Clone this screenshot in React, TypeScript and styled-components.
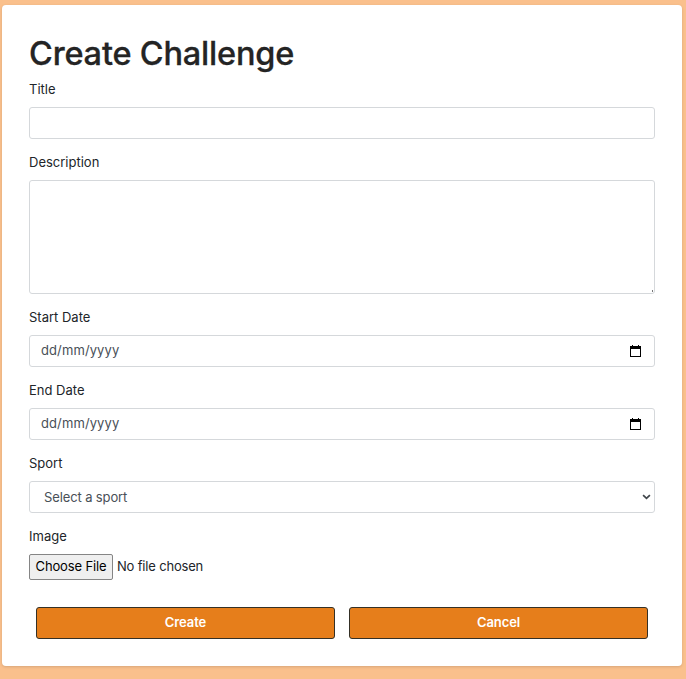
import React from "react";
import styled, { createGlobalStyle, css } from "styled-components";

const GlobalStyle = createGlobalStyle`
  *, *::before, *::after { box-sizing: border-box; }
  body {
    margin: 0;
    background: #fac08c;
    color: #212529;
    font-family: Inter, "Liberation Sans", sans-serif;
    font-size: 13px;
    line-height: 20px;
  }
`;

const Page = styled.main`
  height: 679px;
  padding: 5px 4px 13px 2px;
  overflow: hidden;
`;

const Card = styled.form`
  height: 661px;
  padding: 28px 27px;
  background: #fff;
  border-radius: 4px;
  box-shadow: 0 1px 3px rgba(0, 0, 0, 0.14);
`;

const Heading = styled.h1`
  margin: 0 0 5px;
  font-size: 32.5px;
  line-height: 41px;
  font-weight: 500;
  letter-spacing: -0.19px;
  color: #242424;
  -webkit-text-stroke: 0.3px #242424;
  white-space: nowrap;
`;

const Field = styled.div`
  display: flex;
  flex-direction: column;
  margin-bottom: 13px;
`;

const Label = styled.label`
  height: 20px;
  margin-bottom: 8px;
`;

const control = css`
  width: 100%;
  margin: 0;
  border: 1px solid #d5d8db;
  border-radius: 3px;
  background: #fff;
  color: #495057;
  font: inherit;
  outline: none;
`;

const TextInput = styled.input`
  ${control}
  height: 32px;
  padding: 5px 11px;
`;

const TextArea = styled.textarea`
  ${control}
  display: block;
  height: 114px;
  padding: 5px 11px;
  resize: none;
  background: linear-gradient(#777, #777) right 1px bottom 1px / 1px 2px no-repeat #fff;
`;

const DateInput = styled.div`
  ${control}
  display: flex;
  align-items: center;
  justify-content: space-between;
  height: 32px;
  padding: 0 13px 0 11px;
`;

const DateText = styled.span`
  padding-bottom: 2px;
  letter-spacing: 0.1px;
`;

const SelectBox = styled.div`
  display: grid;
  align-items: center;

  > * {
    grid-area: 1 / 1;
  }

  > svg {
    justify-self: end;
    margin-right: 4px;
    pointer-events: none;
  }
`;

const Select = styled.select`
  ${control}
  appearance: none;
  height: 32px;
  padding: 4px 18px 5px 14px;
  letter-spacing: -0.12px;
`;

const FileRow = styled.label`
  display: flex;
  align-items: center;
  height: 26px;
  gap: 4px;
`;

const FileButton = styled.span`
  width: 84px;
  height: 26px;
  border: 1px solid #858585;
  border-radius: 2px;
  background: #efefef;
  color: #000;
  line-height: 23px;
  text-align: center;
  white-space: nowrap;
  letter-spacing: -0.14px;
`;

const FileName = styled.span`
  padding-bottom: 2px;
  letter-spacing: -0.18px;
`;

const Actions = styled.div`
  display: grid;
  grid-template-columns: 1fr 1fr;
  gap: 14px;
  margin-top: 27px;
  padding: 0 7px;
`;

const ActionButton = styled.button`
  height: 32px;
  padding: 0 0 2px;
  border: 1px solid #343026;
  border-radius: 3px;
  background: #e67e1b;
  color: #fff;
  font: inherit;
  font-weight: 600;
  letter-spacing: -0.1px;
`;

const CalendarIcon = () => (
  <svg width="11" height="12" viewBox="0 0 11 12" shapeRendering="crispEdges" aria-hidden="true">
    <path d="M0 1h11v11H0zM2 0h1v1H2zM8 0h1v1H8zM1 4v7h9V4z" fill="#000" fillRule="evenodd" />
  </svg>
);

const ChevronIcon = () => (
  <svg width="9" height="6" viewBox="0 0 9 6" aria-hidden="true">
    <path d="M1.1 1.1 4.5 4.4 7.9 1.1" fill="none" stroke="#41464b" strokeWidth="1.7" />
  </svg>
);

const DateField = ({ label }: { label: string }) => (
  <Field>
    <Label>{label}</Label>
    <DateInput tabIndex={0}>
      <DateText>dd/mm/yyyy</DateText>
      <CalendarIcon />
    </DateInput>
  </Field>
);

export default function App() {
  return (
    <>
      <GlobalStyle />
      <Page>
        <Card onSubmit={(e) => e.preventDefault()}>
          <Heading>Create Challenge</Heading>
          <Field>
            <Label htmlFor="title">Title</Label>
            <TextInput id="title" />
          </Field>
          <Field>
            <Label htmlFor="description">Description</Label>
            <TextArea id="description" />
          </Field>
          <DateField label="Start Date" />
          <DateField label="End Date" />
          <Field>
            <Label htmlFor="sport">Sport</Label>
            <SelectBox>
              <Select id="sport">
                <option>Select a sport</option>
              </Select>
              <ChevronIcon />
            </SelectBox>
          </Field>
          <Field>
            <Label>Image</Label>
            <FileRow>
              <FileButton>Choose File</FileButton>
              <FileName>No file chosen</FileName>
              <input type="file" hidden />
            </FileRow>
          </Field>
          <Actions>
            <ActionButton type="submit">Create</ActionButton>
            <ActionButton type="button">Cancel</ActionButton>
          </Actions>
        </Card>
      </Page>
    </>
  );
}
